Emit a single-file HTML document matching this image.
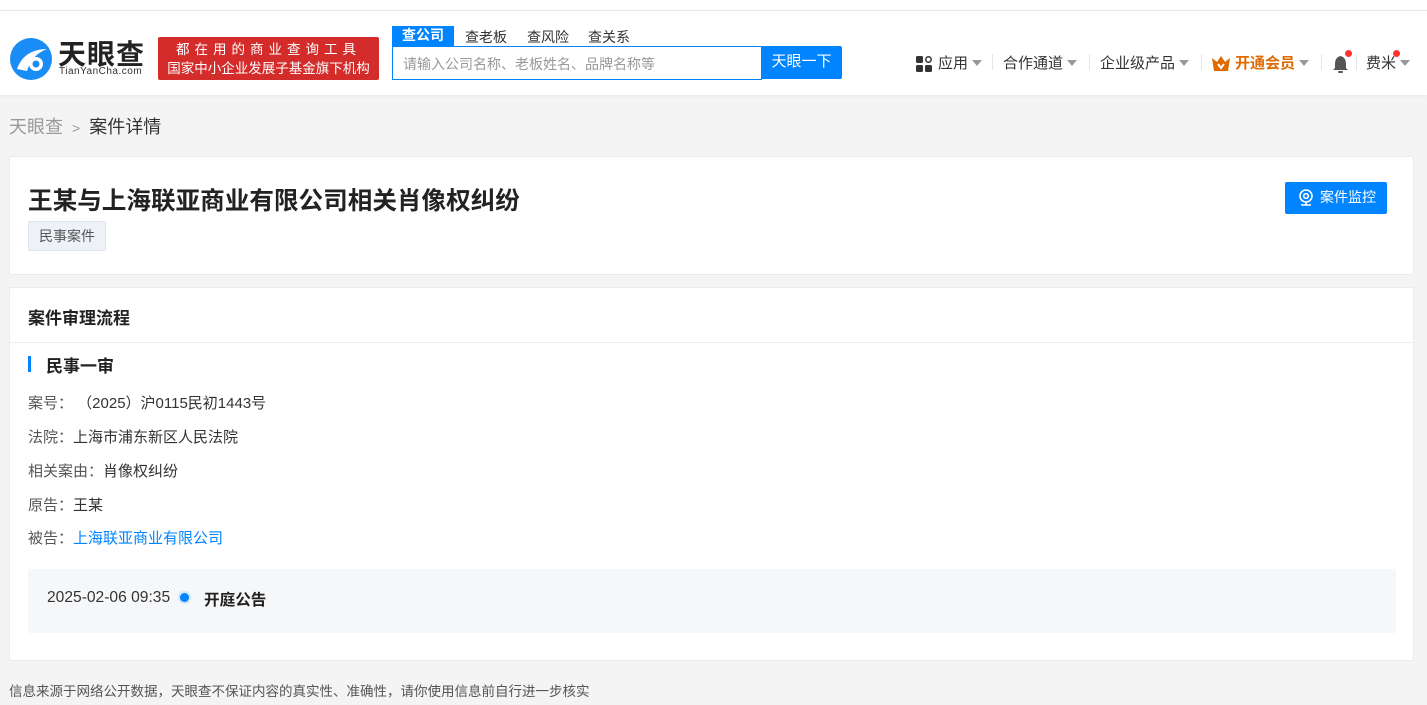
<!DOCTYPE html>
<html><head><meta charset="utf-8"><style>
*{margin:0;padding:0;box-sizing:border-box}
body{width:1427px;height:705px;overflow:hidden;background:#f4f4f4;font-family:"Liberation Sans","Noto Sans CJK SC",sans-serif;color:#333;position:relative}
.abs{position:absolute}
.top{position:absolute;left:0;top:0;width:1427px;height:10px;background:#fff}
.hdr{position:absolute;left:0;top:10px;width:1427px;height:85px;background:#fff;border-top:1px solid #e6e6e6;box-shadow:0 1px 3px rgba(0,0,0,.06)}
.card{position:absolute;left:9px;width:1405px;background:#fff;border:1px solid #ebebeb;border-radius:2px}
.nav span{position:absolute;top:52px;font-size:15px;color:#333}
.caret{display:inline-block;width:0;height:0;border-left:5px solid transparent;border-right:5px solid transparent;border-top:6px solid #999;vertical-align:middle;margin-left:4px;margin-top:-3px}
.sep{position:absolute;top:54px;width:1px;height:16px;background:#e5e5e5}
.row{position:absolute;left:28px;font-size:15px;color:#555}
.row b{font-weight:normal;color:#333}
</style></head><body>
<div class="top"></div>
<div class="hdr"></div>
<svg class="abs" style="left:9px;top:37px" width="45" height="45" viewBox="0 0 45 45">
<circle cx="22" cy="22" r="21" fill="#1a8cf5"/>
<path d="M8 32 C12 20 22 12 38 12 C28 16 22 22 18 34 Z" fill="#fff"/>
<circle cx="27" cy="27" r="7" fill="#fff"/><circle cx="27" cy="27" r="3.5" fill="#1a8cf5"/>
</svg>
<div class="abs" style="left:58px;top:33px;font-size:28px;font-weight:bold;color:#222;letter-spacing:1px">天眼查</div>
<div class="abs" style="left:59px;top:66px;font-size:10px;color:#333;letter-spacing:0.5px">TianYanCha.com</div>
<div class="abs" style="left:158px;top:37px;width:221px;height:43px;background:#d42b2b;border-radius:2px;color:#fff;text-align:center;font-size:13.5px;line-height:19px;padding-top:3px"><div style="letter-spacing:5px">都在用的商业查询工具</div><div>国家中小企业发展子基金旗下机构</div></div>
<div class="abs" style="left:392px;top:26px;width:62px;height:20px;background:#0084ff;color:#fff;font-size:14px;text-align:center;line-height:19px;font-weight:bold">查公司</div>
<div class="abs" style="left:465px;top:27px;font-size:14px;color:#333">查老板</div>
<div class="abs" style="left:527px;top:27px;font-size:14px;color:#333">查风险</div>
<div class="abs" style="left:588px;top:27px;font-size:14px;color:#333">查关系</div>
<div class="abs" style="left:392px;top:46px;width:370px;height:34px;border:1px solid #0084ff;background:#fff;font-size:14px;color:#999;padding:7px 10px">请输入公司名称、老板姓名、品牌名称等</div>
<div class="abs" style="left:761px;top:46px;width:81px;height:33px;background:#0084ff;color:#fff;font-size:15px;text-align:center;line-height:32px;border-radius:0 2px 2px 0">天眼一下</div>
<div class="nav">
<svg class="abs" style="left:916px;top:56px" width="16" height="16"><rect x="0" y="0" width="7" height="7" rx="1.5" fill="#333"/><rect x="0" y="9" width="7" height="7" rx="1.5" fill="#333"/><rect x="9" y="9" width="7" height="7" rx="1.5" fill="#333"/><circle cx="12.5" cy="3.5" r="2.7" fill="none" stroke="#333" stroke-width="1.5"/></svg>
<span style="left:938px">应用<i class="caret"></i></span>
<div class="sep" style="left:992px"></div>
<span style="left:1003px">合作通道<i class="caret"></i></span>
<div class="sep" style="left:1089px"></div>
<span style="left:1100px">企业级产品<i class="caret"></i></span>
<div class="sep" style="left:1201px"></div>
<svg class="abs" style="left:1212px;top:56px" width="18" height="15"><path d="M0 2 L5 6 L9 0 L13 6 L18 2 L16 15 L2 15 Z" fill="#e06a00"/><path d="M6 8 L9 12 L12 8" stroke="#fff" stroke-width="2" fill="none"/></svg>
<span style="left:1235px;color:#e06a00;font-weight:bold">开通会员<i class="caret"></i></span>
<div class="sep" style="left:1321px"></div>
<svg class="abs" style="left:1332px;top:55px" width="17" height="18"><path d="M8.5 1 C4 2 3 6 3 9 L3 13 L1 15 L16 15 L14 13 L14 9 C14 6 13 2 8.5 1Z" fill="#555"/><rect x="6" y="16" width="5" height="2" rx="1" fill="#555"/></svg>
<div class="abs" style="left:1345px;top:50px;width:7px;height:7px;border-radius:50%;background:#f33"></div>
<div class="sep" style="left:1356px"></div>
<span style="left:1366px">费米<i class="caret"></i></span>
<div class="abs" style="left:1393px;top:50px;width:7px;height:7px;border-radius:50%;background:#f33"></div>
</div>
<div class="abs" style="left:9px;top:113px;font-size:18px;color:#999">天眼查 <span style="font-size:14px;margin:0 4px">&gt;</span> <span style="color:#333">案件详情</span></div>
<div class="card" style="top:156px;height:119px"></div>
<div class="abs" style="left:28px;top:181px;font-size:24.6px;font-weight:bold;color:#222">王某与上海联亚商业有限公司相关肖像权纠纷</div>
<div class="abs" style="left:28px;top:221px;width:78px;height:30px;background:#eef2f8;border:1px solid #dde4ee;border-radius:2px;font-size:14px;color:#555;text-align:center;line-height:28px">民事案件</div>
<div class="abs" style="left:1285px;top:182px;width:102px;height:32px;background:#0084ff;border-radius:2px;color:#fff;font-size:14px;line-height:31px;padding-left:35px">案件监控</div>
<svg class="abs" style="left:1298px;top:189px" width="16" height="18"><circle cx="8" cy="7" r="6" fill="none" stroke="#fff" stroke-width="1.6"/><circle cx="8" cy="7" r="2.3" fill="none" stroke="#fff" stroke-width="1.6"/><path d="M3 16 L13 16 M8 13 L8 16" stroke="#fff" stroke-width="1.6"/></svg>
<div class="card" style="top:287px;height:374px"></div>
<div class="abs" style="left:28px;top:304px;font-size:17px;font-weight:bold;color:#222">案件审理流程</div>
<div class="abs" style="left:10px;top:342px;width:1403px;height:1px;background:#eee"></div>
<div class="abs" style="left:28px;top:356px;width:3px;height:16px;background:#0084ff"></div>
<div class="abs" style="left:46px;top:352px;font-size:17px;font-weight:bold;color:#222">民事一审</div>
<div class="row" style="top:392px">案号：&nbsp;<b>（2025）沪0115民初1443号</b></div>
<div class="row" style="top:426px">法院：<b>上海市浦东新区人民法院</b></div>
<div class="row" style="top:460px">相关案由：<b>肖像权纠纷</b></div>
<div class="row" style="top:494px">原告：<b>王某</b></div>
<div class="row" style="top:527px">被告：<b style="color:#0084ff">上海联亚商业有限公司</b></div>
<div class="abs" style="left:28px;top:569px;width:1368px;height:64px;background:#f6f7f9"></div>
<div class="abs" style="left:47px;top:589px;font-size:15.6px;color:#333">2025-02-06 09:35</div>
<div class="abs" style="left:180px;top:593px;width:9px;height:9px;border-radius:50%;background:#0084ff;box-shadow:0 0 0 2px #cfe6ff"></div>
<div class="abs" style="left:204px;top:588px;font-size:15.6px;font-weight:bold;color:#222">开庭公告</div>
<div class="abs" style="left:9px;top:680px;font-size:13.5px;color:#555">信息来源于网络公开数据，天眼查不保证内容的真实性、准确性，请你使用信息前自行进一步核实</div>
</body></html>
